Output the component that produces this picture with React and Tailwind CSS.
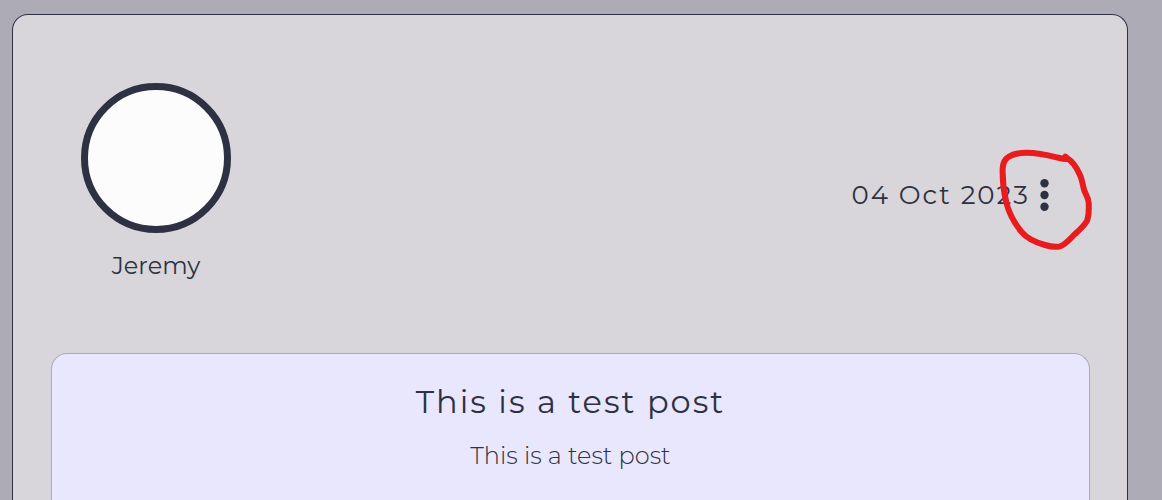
function Avatar({ name }) {
  return (
    <figure className="flex w-[150px] flex-col items-center pb-6">
      <div
        role="img"
        aria-label={name}
        className="size-[150px] rounded-full border-[7px] border-[#2d3142] bg-[#fcfcfc]"
      />
      <figcaption className="mt-4 text-2xl leading-[34px]">{name}</figcaption>
    </figure>
  );
}

function PostMenu() {
  return (
    <div className="relative">
      <button type="button" aria-label="Post options" className="block h-8 w-[9px] cursor-pointer">
        <svg viewBox="0 0 9 32" className="block h-8 w-[9px]" fill="#2d3142" aria-hidden="true">
          <circle cx="4.5" cy="4.2" r="4.2" />
          <circle cx="4.5" cy="16" r="4.2" />
          <circle cx="4.5" cy="27.8" r="4.2" />
        </svg>
      </button>
      <svg
        viewBox="0 0 390 390"
        className="pointer-events-none absolute -left-[60px] -top-[49px] size-[130px] max-w-none"
        fill="none"
        stroke="#e81c1c"
        strokeWidth="18"
        strokeLinecap="round"
        strokeLinejoin="round"
        aria-hidden="true"
      >
        <path d="M264 87 C255 88 243 85 230 82 C196 73 165 68 140 68 C118 68 98 73 85 81 C72 89 69 99 68 115 C67 150 71 185 79 218 C87 250 102 278 124 305 C141 326 165 337 195 345 C212 350 228 352 240 349 C257 344 270 326 286 311 C303 296 317 283 322 270 C327 254 327 236 326 218 C325 203 318 195 313 182 C308 166 307 148 298 131 C289 111 276 94 262 85 L256 80" />
      </svg>
    </div>
  );
}

export default function App() {
  return (
    <main className="flex min-h-screen flex-col bg-[#adabb5] pl-3 pr-[34px] pt-3.5 font-['Montserrat','Inter',sans-serif] text-[#2d3142]">
      <article className="flex grow flex-col rounded-t-2xl border border-b-0 border-[#2d3142] bg-[#d8d6db] pl-[38px] pr-[37px] pt-[68px]">
        <header className="flex items-center justify-between pl-[30px] pr-[41px]">
          <Avatar name="Jeremy" />
          <div className="flex items-center gap-2.5">
            <time dateTime="2023-10-04" className="text-[26px] tracking-[2px]">
              04 Oct 2023
            </time>
            <PostMenu />
          </div>
        </header>
        <section className="mt-[46px] grow rounded-t-2xl border border-b-0 border-[#adabb5] bg-[#e9e7fe] px-6 pt-7 text-center">
          <h1 className="text-[32px] leading-10 tracking-[2px]">This is a test post</h1>
          <p className="mt-4 text-2xl font-light leading-9">This is a test post</p>
        </section>
      </article>
    </main>
  );
}
